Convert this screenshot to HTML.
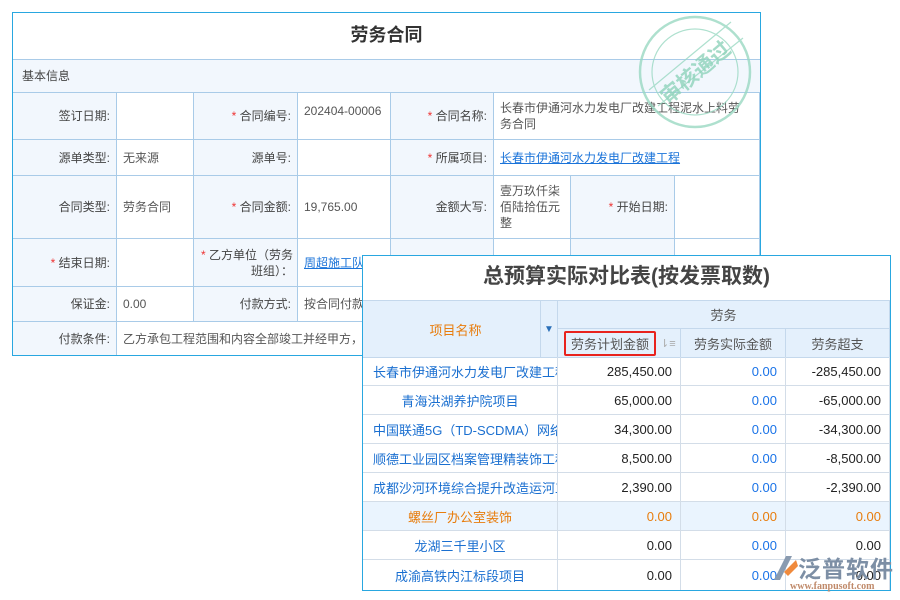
<!DOCTYPE html>
<html><head><meta charset="utf-8"><style>
body{margin:0;width:900px;height:600px;background:#fff;position:relative;overflow:hidden;font-family:"Liberation Sans","Noto Sans CJK SC",sans-serif;font-size:12px;color:#555}
.a{position:absolute;box-sizing:border-box}
#p1{left:12px;top:12px;width:749px;height:344px;border:1px solid #29a7e0;background:#fff}
.c{position:absolute;box-sizing:border-box;border-right:1px solid #a9cbe8;border-bottom:1px solid #a9cbe8;display:flex;align-items:center;padding:0 6px;line-height:16px}
.l{background:#f2f7fd;justify-content:flex-end;color:#444}
.s{color:#e33}
.lk{color:#1a73d9;text-decoration:underline}
#p2{left:362px;top:255px;width:529px;height:336px;border:1px solid #29a7e0;background:#fff}
.t{position:absolute;box-sizing:border-box;border-right:1px solid #d3dde8;border-bottom:1px solid #d3dde8;display:flex;align-items:center;font-size:13px;padding:0 8px;white-space:nowrap;overflow:hidden}
.h{background:#e4f0fc;justify-content:center;color:#555;border-color:#c4d8ec}
.n{justify-content:center;color:#1a6fd0}
.r{justify-content:flex-end;color:#222}
.b{justify-content:flex-end;color:#1a73e8}
.o{color:#e87d0d!important;background:#eaf4fe}
</style></head><body>
<div id="p1" class="a">
<div class="a" style="left:0;top:0;width:747px;height:47px;border-bottom:1px solid #a9cbe8;text-align:center;line-height:44px;font-size:18px;font-weight:bold;color:#333">劳务合同</div>
<div class="a" style="left:0;top:47px;width:747px;height:33px;background:#f2f7fd;border-bottom:1px solid #a9cbe8;line-height:32px;padding-left:9px;color:#444">基本信息</div>
<div class="c l" style="left:0;top:80px;width:104px;height:47px">签订日期:</div>
<div class="c" style="left:104px;top:80px;width:77px;height:47px"></div>
<div class="c l" style="left:181px;top:80px;width:104px;height:47px"><span class="s">*</span>&nbsp;合同编号:</div>
<div class="c" style="left:285px;top:80px;width:93px;height:47px;align-items:flex-start;padding-top:10px">202404-00006</div>
<div class="c l" style="left:378px;top:80px;width:103px;height:47px"><span class="s">*</span>&nbsp;合同名称:</div>
<div class="c" style="left:481px;top:80px;width:266px;height:47px;padding-right:10px">长春市伊通河水力发电厂改建工程泥水上料劳务合同</div>
<div class="c l" style="left:0;top:127px;width:104px;height:36px">源单类型:</div>
<div class="c" style="left:104px;top:127px;width:77px;height:36px">无来源</div>
<div class="c l" style="left:181px;top:127px;width:104px;height:36px">源单号:</div>
<div class="c" style="left:285px;top:127px;width:93px;height:36px"></div>
<div class="c l" style="left:378px;top:127px;width:103px;height:36px"><span class="s">*</span>&nbsp;所属项目:</div>
<div class="c" style="left:481px;top:127px;width:266px;height:36px"><span class="lk">长春市伊通河水力发电厂改建工程</span></div>
<div class="c l" style="left:0;top:163px;width:104px;height:63px">合同类型:</div>
<div class="c" style="left:104px;top:163px;width:77px;height:63px">劳务合同</div>
<div class="c l" style="left:181px;top:163px;width:104px;height:63px"><span class="s">*</span>&nbsp;合同金额:</div>
<div class="c" style="left:285px;top:163px;width:93px;height:63px">19,765.00</div>
<div class="c l" style="left:378px;top:163px;width:103px;height:63px">金额大写:</div>
<div class="c" style="left:481px;top:163px;width:77px;height:63px">壹万玖仟柒佰陆拾伍元整</div>
<div class="c l" style="left:558px;top:163px;width:104px;height:63px"><span class="s">*</span>&nbsp;开始日期:</div>
<div class="c" style="left:662px;top:163px;width:85px;height:63px"></div>
<div class="c l" style="left:0;top:226px;width:104px;height:48px"><span class="s">*</span>&nbsp;结束日期:</div>
<div class="c" style="left:104px;top:226px;width:77px;height:48px"></div>
<div class="c l" style="left:181px;top:226px;width:104px;height:48px;text-align:right;padding-right:4px"><span><span class="s">*</span> 乙方单位（劳务班组）：</span></div>
<div class="c" style="left:285px;top:226px;width:93px;height:48px"><span class="lk">周超施工队</span></div>
<div class="c l" style="left:378px;top:226px;width:103px;height:48px"></div>
<div class="c" style="left:481px;top:226px;width:77px;height:48px"></div>
<div class="c l" style="left:558px;top:226px;width:104px;height:48px"></div>
<div class="c" style="left:662px;top:226px;width:85px;height:48px"></div>
<div class="c l" style="left:0;top:274px;width:104px;height:35px">保证金:</div>
<div class="c" style="left:104px;top:274px;width:77px;height:35px">0.00</div>
<div class="c l" style="left:181px;top:274px;width:104px;height:35px">付款方式:</div>
<div class="c" style="left:285px;top:274px;width:93px;height:35px">按合同付款</div>
<div class="c l" style="left:0;top:309px;width:104px;height:33px;border-bottom:none">付款条件:</div>
<div class="c" style="left:104px;top:309px;width:643px;height:33px;border-bottom:none;white-space:nowrap;overflow:hidden">乙方承包工程范围和内容全部竣工并经甲方，设计、监理单位验收合格</div>
</div>
<svg class="a" style="left:625px;top:10px" width="135" height="125" viewBox="0 0 135 125">
<g fill="none" stroke="#9ad9c3" stroke-width="2.5" opacity=".8"><circle cx="70" cy="62" r="55"/><circle cx="70" cy="62" r="43" stroke-width="1.2"/><line x1="33" y1="96" x2="118" y2="28" stroke-width="1.2"/><line x1="24" y1="80" x2="106" y2="12" stroke-width="1.2"/></g>
<text x="70" y="70" transform="rotate(-40 70 62)" text-anchor="middle" font-size="21" font-weight="bold" fill="#8fd3bb" opacity=".8" font-family="Noto Sans CJK SC,sans-serif">审核通过</text>
</svg>
<div id="p2" class="a">
<div class="a" style="left:0;top:0;width:527px;height:45px;border-bottom:1px solid #c4d8ec;text-align:center;line-height:42px;font-size:21px;font-weight:bold;color:#444">总预算实际对比表(按发票取数)</div>
<div class="t h" style="left:0;top:45px;width:178px;height:57px;color:#e87d0d;justify-content:center;padding-right:0">项目名称</div>
<div class="t h" style="left:178px;top:45px;width:17px;height:57px;border-right:1px solid #c4d8ec;justify-content:center;padding:0;color:#2a6fb8;font-size:10px">▼</div>
<div class="t h" style="left:195px;top:45px;width:332px;height:28px">劳务</div>
<div class="t h" style="left:195px;top:73px;width:123px;height:29px;justify-content:flex-start">
<span style="border:2px solid #e8231e;border-radius:2px;padding:1px 5px;margin-left:-2px">劳务计划金额</span><span style="color:#aaa;margin-left:4px;font-size:11px">⇂≡</span></div>
<div class="t h" style="left:318px;top:73px;width:105px;height:29px">劳务实际金额</div>
<div class="t h" style="left:423px;top:73px;width:104px;height:29px">劳务超支</div>
</div>
<div class="a" style="left:363px;top:357px;width:527px;height:233px">
<div class="t n" style="left:0;top:0;width:195px;height:29px;justify-content:flex-start;padding-left:10px">长春市伊通河水力发电厂改建工程</div><div class="t r" style="left:195px;top:0;width:123px;height:29px">285,450.00</div><div class="t b" style="left:318px;top:0;width:105px;height:29px">0.00</div><div class="t r" style="left:423px;top:0;width:104px;height:29px">-285,450.00</div>
<div class="t n" style="left:0;top:29px;width:195px;height:29px">青海洪湖养护院项目</div><div class="t r" style="left:195px;top:29px;width:123px;height:29px">65,000.00</div><div class="t b" style="left:318px;top:29px;width:105px;height:29px">0.00</div><div class="t r" style="left:423px;top:29px;width:104px;height:29px">-65,000.00</div>
<div class="t n" style="left:0;top:58px;width:195px;height:29px;justify-content:flex-start;padding-left:10px">中国联通5G（TD-SCDMA）网络工程</div><div class="t r" style="left:195px;top:58px;width:123px;height:29px">34,300.00</div><div class="t b" style="left:318px;top:58px;width:105px;height:29px">0.00</div><div class="t r" style="left:423px;top:58px;width:104px;height:29px">-34,300.00</div>
<div class="t n" style="left:0;top:87px;width:195px;height:29px;justify-content:flex-start;padding-left:10px">顺德工业园区档案管理精装饰工程</div><div class="t r" style="left:195px;top:87px;width:123px;height:29px">8,500.00</div><div class="t b" style="left:318px;top:87px;width:105px;height:29px">0.00</div><div class="t r" style="left:423px;top:87px;width:104px;height:29px">-8,500.00</div>
<div class="t n" style="left:0;top:116px;width:195px;height:29px;justify-content:flex-start;padding-left:10px">成都沙河环境综合提升改造运河工程</div><div class="t r" style="left:195px;top:116px;width:123px;height:29px">2,390.00</div><div class="t b" style="left:318px;top:116px;width:105px;height:29px">0.00</div><div class="t r" style="left:423px;top:116px;width:104px;height:29px">-2,390.00</div>
<div class="t n o" style="left:0;top:145px;width:195px;height:29px">螺丝厂办公室装饰</div><div class="t r o" style="left:195px;top:145px;width:123px;height:29px">0.00</div><div class="t b o" style="left:318px;top:145px;width:105px;height:29px">0.00</div><div class="t r o" style="left:423px;top:145px;width:104px;height:29px">0.00</div>
<div class="t n" style="left:0;top:174px;width:195px;height:29px">龙湖三千里小区</div><div class="t r" style="left:195px;top:174px;width:123px;height:29px">0.00</div><div class="t b" style="left:318px;top:174px;width:105px;height:29px">0.00</div><div class="t r" style="left:423px;top:174px;width:104px;height:29px">0.00</div>
<div class="t n" style="left:0;top:203px;width:195px;height:30px;border-bottom:none">成渝高铁内江标段项目</div><div class="t r" style="left:195px;top:203px;width:123px;height:30px;border-bottom:none">0.00</div><div class="t b" style="left:318px;top:203px;width:105px;height:30px;border-bottom:none">0.00</div><div class="t r" style="left:423px;top:203px;width:104px;height:30px;border-bottom:none">0.00</div>
</div>
<div class="a" style="left:768px;top:552px;width:125px;height:45px">
<svg class="a" style="left:2px;top:0" width="30" height="30" viewBox="0 0 30 30"><path d="M4 28 L16 4 L22 4 L10 28Z" fill="#8a9bb0"/><path d="M14 20 L26 8 L28 14 L18 24Z" fill="#f08a3c"/></svg>
<div class="a" style="left:30px;top:-2px;font-size:23px;font-weight:bold;color:#7d8fa5;letter-spacing:1px;white-space:nowrap">泛普软件</div>
<div class="a" style="left:22px;top:29px;font-size:10px;color:#c08a6a;font-family:'Liberation Serif',serif;font-weight:bold;white-space:nowrap">www.fanpusoft.com</div>
</div>
</body></html>
